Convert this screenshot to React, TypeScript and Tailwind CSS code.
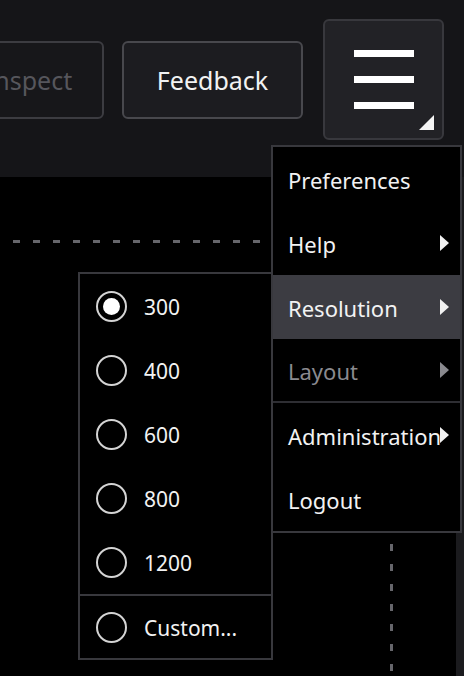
const FONT = { fontFamily: '"Noto Sans", "Open Sans", sans-serif' };

const MAIN_ITEMS = [
  { label: "Preferences" },
  { label: "Help", arrow: true },
  { label: "Resolution", arrow: true, active: true },
  { label: "Layout", arrow: true, disabled: true, divider: true },
  { label: "Administration", arrow: true },
  { label: "Logout" },
];

const RESOLUTIONS = ["300", "400", "600", "800", "1200"];

function Arrow({ dim }: { dim?: boolean }) {
  return (
    <svg width="10" height="16" viewBox="0 0 10 16" className="absolute right-[11px] top-1/2 -translate-y-1/2">
      <path d="M1 0 L10 8 L1 16 Z" fill={dim ? "#8a8a8f" : "#f2f2f2"} />
    </svg>
  );
}

function Radio({ checked }: { checked?: boolean }) {
  return (
    <span className="flex h-[31px] w-[31px] shrink-0 items-center justify-center rounded-full border-[2px] border-[#d4d4d4]">
      {checked && <span className="h-[17px] w-[17px] rounded-full bg-white" />}
    </span>
  );
}

export default function App() {
  return (
    <div className="relative h-[676px] w-[464px] overflow-hidden bg-black text-[#f2f2f2]" style={FONT}>
      {/* toolbar */}
      <div className="flex h-[177px] items-start justify-end gap-[18px] bg-[#151518] pr-[20px] pt-[19px]">
        <button className="mt-[22px] flex h-[78px] w-[150px] shrink-0 items-center justify-center rounded-[6px] border-[2px] border-[#3c3c41] bg-[#17171a] pt-[2px] text-[25px] text-[#56565c]">
          Inspect
        </button>
        <button className="mt-[22px] flex h-[78px] w-[181px] shrink-0 items-center justify-center rounded-[6px] border-[2px] border-[#48484d] bg-[#1c1c20] pt-[2px] text-[25px] text-[#f2f2f2]">
          Feedback
        </button>
        <button className="relative ml-[2px] flex h-[121px] w-[121px] shrink-0 flex-col items-center justify-center gap-[19px] rounded-[6px] border-[2px] border-[#38383d] bg-[#222226]">
          <span className="h-[7px] w-[60px] bg-white" />
          <span className="h-[7px] w-[60px] bg-white" />
          <span className="h-[7px] w-[60px] bg-white" />
          <svg width="15" height="15" viewBox="0 0 15 15" className="absolute bottom-[8px] right-[8px]">
            <path d="M15 0 L15 15 L0 15 Z" fill="#f5f5f5" />
          </svg>
        </button>
      </div>

      {/* canvas guides */}
      <div className="absolute left-0 top-[240px] h-[3px] w-[272px] bg-[repeating-linear-gradient(to_right,transparent_0px,transparent_13px,#66666b_13px,#66666b_20px)]" />
      <div className="absolute left-[390px] top-[544px] h-[140px] w-[3px] bg-[repeating-linear-gradient(to_bottom,#66666b_0px,#66666b_7px,transparent_7px,transparent_20px)]" />
      <div className="absolute right-0 top-[177px] h-[499px] w-[8px] bg-[#1b1b1e]" />

      {/* main menu */}
      <div className="absolute left-[271px] top-[145px] w-[191px] border-[2px] border-[#38383d] bg-black">
        {MAIN_ITEMS.map((item) => (
          <div
            key={item.label}
            className={`relative flex h-[64px] items-center whitespace-nowrap pl-[15px] pt-[3px] text-[22px] ${
              item.active ? "bg-[#3c3c42]" : ""
            } ${item.disabled ? "text-[#8a8a8f]" : ""} ${item.divider ? "border-b-[2px] border-[#2e2e33]" : ""}`}
          >
            {item.label}
            {item.arrow && <Arrow dim={item.disabled} />}
          </div>
        ))}
      </div>

      {/* resolution submenu */}
      <div className="absolute left-[78px] top-[272px] w-[195px] border-[2px] border-[#38383d] bg-black">
        {RESOLUTIONS.map((r, i) => (
          <div key={r} className="flex h-[64px] items-center gap-[17px] pl-[16px] text-[21px]">
            <Radio checked={i === 0} />
            <span className="pt-[3px]">{r}</span>
          </div>
        ))}
        <div className="flex h-[64px] items-center gap-[17px] border-t-[2px] border-[#38383d] pl-[16px] text-[21px]">
          <Radio />
          <span className="pt-[3px]">Custom...</span>
        </div>
      </div>
    </div>
  );
}
